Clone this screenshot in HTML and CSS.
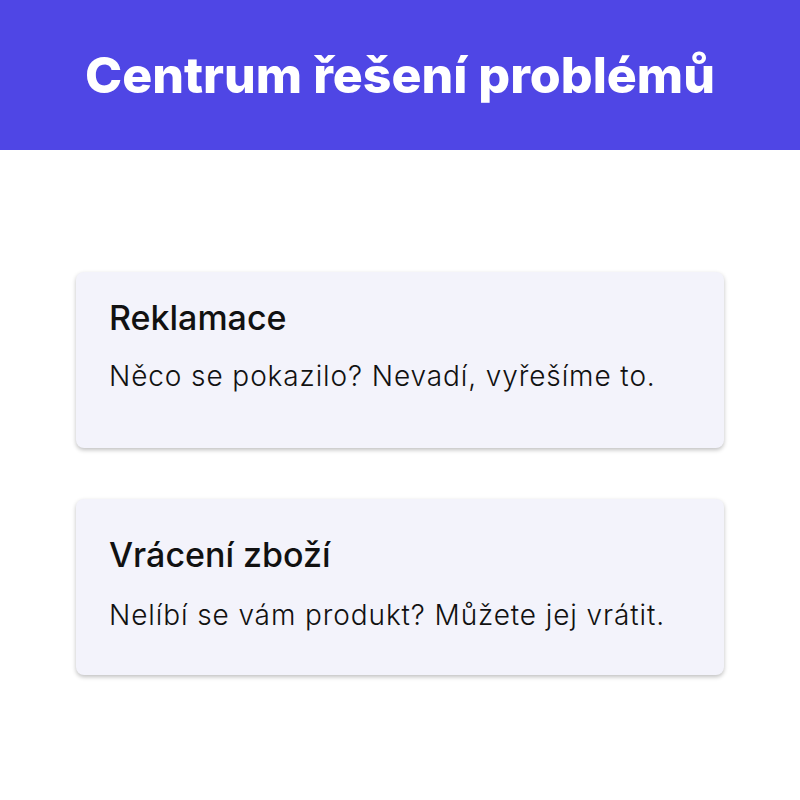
FILE: index.html
```html
<!DOCTYPE html>
<html lang="cs">
<head>
  <meta charset="UTF-8">
  <title>Centrum řešení problémů</title>
  <meta name="viewport" content="width=device-width, initial-scale=1">
  <link rel="stylesheet" href="styles.css">
</head>
<body>
  <header>
    <h1>Centrum řešení problémů</h1>
  </header>
  <main>
    <div class="card">
      <h2>Reklamace</h2>
      <p>Něco se pokazilo? Nevadí, vyřešíme to.</p>
    </div>
    <div class="card card-low">
      <h2>Vrácení zboží</h2>
      <p>Nelíbí se vám produkt? Můžete jej vrátit.</p>
    </div>
  </main>
</body>
</html>
```

FILE: styles.css
```css
body {
  font-family: Inter, 'Noto Sans', sans-serif;
  background: #fff;
  margin: 0;
  padding: 0;
  color: #111;
}
header {
  background: #4f46e5;
  color: #fff;
  height: 150px;
  display: flex;
  align-items: center;
  justify-content: center;
}
header h1 {
  margin: 0;
  font-size: 50px;
  font-weight: 800;
  line-height: 1.2;
}
main {
  padding: 122px 76px;
  display: flex;
  flex-direction: column;
  gap: 51px;
}
.card {
  background: #f3f3fb;
  border-radius: 8px;
  box-shadow: 0 2px 4px rgba(0,0,0,0.25);
  padding: 25px 33px 0;
  height: 176px;
  box-sizing: border-box;
}
.card h2 {
  margin: 0;
  font-size: 34px;
  line-height: 41px;
  font-weight: 500;
}
.card p {
  margin: 21px 0 0;
  font-size: 28px;
  line-height: 34px;
  font-weight: 300;
  letter-spacing: 0.9px;
}
.card-low {
  padding-top: 35px;
}
.card-low p {
  margin-top: 23px;
}
```
